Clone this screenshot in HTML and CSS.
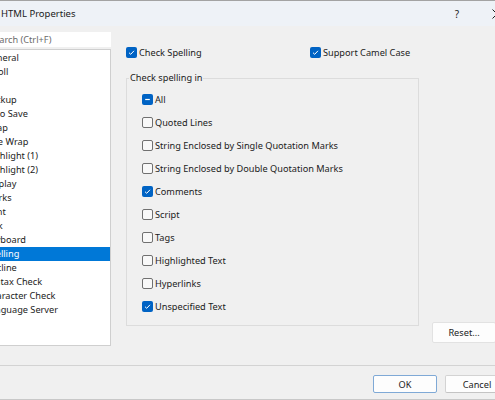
FILE: index.html
```html
<!DOCTYPE html>
<html>
<head>
<meta charset="utf-8">
<link rel="stylesheet" href="styles.css">
</head>
<body>
<div class="window">
  <div class="titlebar">
    <span class="title">HTML Properties</span>
    <span class="help">?</span>
    <span class="close"><svg width="10" height="10" viewBox="0 0 10 10"><path d="M0.5 0.5 L9.5 9.5 M9.5 0.5 L0.5 9.5" stroke="#1a1a1a" stroke-width="1" fill="none"/></svg></span>
  </div>
  <div class="main">
    <div class="left">
      <div class="search">Search (Ctrl+F)</div>
      <div class="list">
        <div class="item">General</div>
        <div class="item">Scroll</div>
        <div class="item">File</div>
        <div class="item">Backup</div>
        <div class="item">Auto Save</div>
        <div class="item">Wrap</div>
        <div class="item">Line Wrap</div>
        <div class="item">Highlight (1)</div>
        <div class="item">Highlight (2)</div>
        <div class="item">Display</div>
        <div class="item">Marks</div>
        <div class="item">Print</div>
        <div class="item">Link</div>
        <div class="item">Keyboard</div>
        <div class="item selected">Spelling</div>
        <div class="item">Outline</div>
        <div class="item">Syntax Check</div>
        <div class="item">Character Check</div>
        <div class="item">Language Server</div>
      </div>
    </div>
    <div class="right">
      <div class="toprow">
        <label class="chk first"><span class="box on"><svg width="11" height="11" viewBox="0 0 11 11"><path d="M3 5.7 L4.7 7.3 L8 3.8" stroke="#fff" stroke-width="1" fill="none"/></svg></span>Check Spelling</label>
        <label class="chk"><span class="box on"><svg width="11" height="11" viewBox="0 0 11 11"><path d="M3 5.7 L4.7 7.3 L8 3.8" stroke="#fff" stroke-width="1" fill="none"/></svg></span>Support Camel Case</label>
      </div>
      <div class="body">
        <fieldset class="group">
          <legend>Check spelling in</legend>
          <div class="opts">
            <label class="chk row"><span class="box on"><svg width="11" height="11" viewBox="0 0 11 11"><path d="M3.2 5.5 H7.8" stroke="#fff" stroke-width="1.2" fill="none"/></svg></span>All</label>
            <label class="chk row"><span class="box"></span>Quoted Lines</label>
            <label class="chk row"><span class="box"></span>String Enclosed by Single Quotation Marks</label>
            <label class="chk row"><span class="box"></span>String Enclosed by Double Quotation Marks</label>
            <label class="chk row"><span class="box on"><svg width="11" height="11" viewBox="0 0 11 11"><path d="M3 5.7 L4.7 7.3 L8 3.8" stroke="#fff" stroke-width="1" fill="none"/></svg></span>Comments</label>
            <label class="chk row"><span class="box"></span>Script</label>
            <label class="chk row"><span class="box"></span>Tags</label>
            <label class="chk row"><span class="box"></span>Highlighted Text</label>
            <label class="chk row"><span class="box"></span>Hyperlinks</label>
            <label class="chk row"><span class="box on"><svg width="11" height="11" viewBox="0 0 11 11"><path d="M3 5.7 L4.7 7.3 L8 3.8" stroke="#fff" stroke-width="1" fill="none"/></svg></span>Unspecified Text</label>
          </div>
        </fieldset>
        <div class="btn reset">Reset...</div>
      </div>
    </div>
  </div>
  <div class="footer">
    <div class="btn ok">OK</div>
    <div class="btn">Cancel</div>
  </div>
</div>
</body>
</html>
```
FILE: styles.css
```css
html, body {
  margin: 0;
  padding: 0;
  overflow: hidden;
  background: #f0f0f0;
}
body {
  width: 495px;
  height: 400px;
  font-family: "Noto Sans", "Open Sans", sans-serif;
  font-size: 9.2px;
  color: #1b1b1b;
}
.window {
  width: 540px;
  margin-left: -24px;
  background: #f0f0f0;
}
.titlebar {
  height: 25px;
  border-top: 1px solid #a3a3a3;
  background: #eef2f7;
  display: flex;
  align-items: center;
  padding-left: 25px;
  box-sizing: content-box;
}
.title {
  flex: 1;
  font-size: 9.5px;
  color: #1a1a1a;
}
.help {
  font-size: 10px;
  width: 10px;
  text-align: center;
  margin-right: 30px;
}
.close {
  width: 10px;
  height: 10px;
  display: flex;
  margin-right: 14px;
}
.main {
  display: flex;
  height: 339px;
  box-sizing: border-box;
  padding-top: 6px;
  padding-left: 4px;
}
.left {
  width: 131px;
  display: flex;
  flex-direction: column;
  gap: 2px;
}
.search {
  height: 15px;
  background: #fff;
  color: #6b6b6b;
  padding-left: 9px;
  line-height: 15px;
  box-sizing: border-box;
}
.list {
  height: 297px;
  background: #fff;
  border: 1px solid #cfcfcf;
  box-sizing: border-box;
  padding-top: 1px;
}
.item {
  height: 14px;
  line-height: 14px;
  padding-left: 4px;
  white-space: nowrap;
}
.item.selected {
  background: #0078d7;
  color: #fff;
}
.right {
  display: flex;
  flex-direction: column;
  margin-left: 15px;
  padding-top: 12px;
}
.toprow {
  display: flex;
  height: 16px;
  align-items: center;
}
.chk {
  display: flex;
  align-items: center;
  white-space: nowrap;
}
.chk.first {
  width: 184px;
}
.box {
  width: 11px;
  height: 11px;
  box-sizing: border-box;
  border: 1px solid #707070;
  border-radius: 2px;
  background: #f8f8f8;
  margin-right: 2px;
  display: flex;
  flex-shrink: 0;
}
.box.on {
  border: none;
  background: #0063c4;
}
.body {
  display: flex;
  align-items: flex-end;
  margin-top: 12px;
}
.group {
  margin: 0 0 17px 0;
  padding: 0;
  border: 1px solid #dcdcdc;
  width: 293px;
  box-sizing: border-box;
}
.group legend {
  margin-left: 2px;
  padding: 0 1px;
  line-height: 12px;
}
.opts {
  padding: 4px 0 7px 15px;
}
.row {
  height: 23px;
}
.btn {
  width: 64px;
  height: 18px;
  box-sizing: border-box;
  background: #fdfdfd;
  border: 1px solid #d3d3d3;
  border-bottom-color: #c4c4c4;
  border-radius: 2px;
  display: flex;
  align-items: center;
  justify-content: center;
}
.reset {
  height: 21px;
  margin-left: 13px;
  border-color: #e2e2e2;
}
.footer {
  border-top: 1px solid #d3d3d3;
  border-bottom: 1px solid #c8c8c8;
  display: flex;
  justify-content: flex-end;
  gap: 8px;
  padding: 9px 7px 0 0;
  box-sizing: content-box;
  height: 24px;
}
.ok {
  border-color: #7fa9d6;
}
```
